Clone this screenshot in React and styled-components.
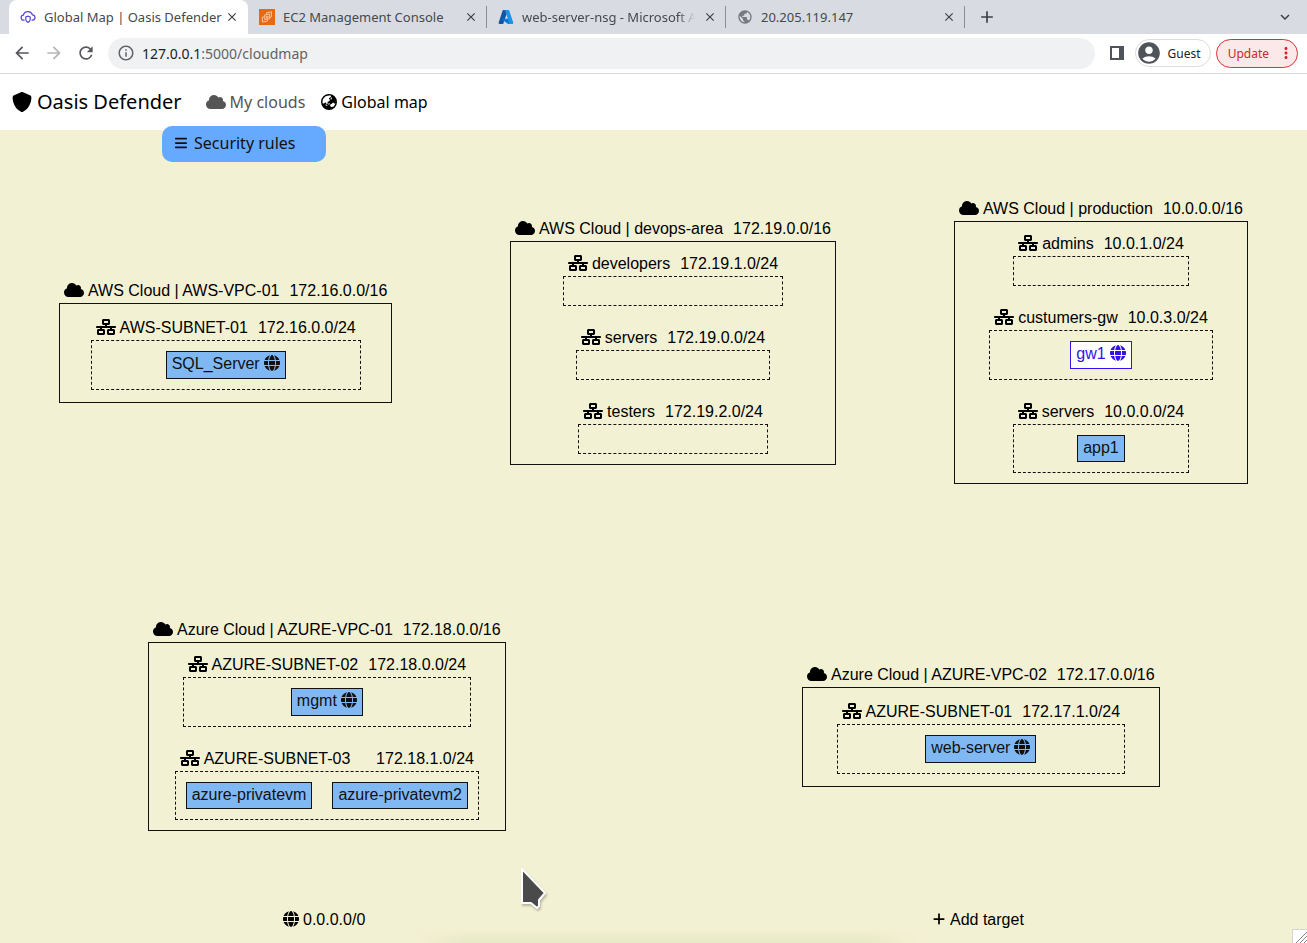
import React from "react";
import styled, { createGlobalStyle } from "styled-components";
import {
  FaBars,
  FaCloud,
  FaEarthAsia,
  FaGlobe,
  FaNetworkWired,
  FaPlus,
  FaShield,
} from "react-icons/fa6";
import {
  MdArrowBack,
  MdArrowForward,
  MdRefresh,
  MdInfoOutline,
  MdClose,
  MdAdd,
  MdPublic,
  MdMoreVert,
  MdAccountCircle,
  MdExpandMore,
} from "react-icons/md";

const Global = createGlobalStyle`
  * { box-sizing: border-box; }
  body { margin: 0; background: #ffffff; }
  button { font: inherit; color: inherit; background: none; border: 0; padding: 0; margin: 0; cursor: pointer; }
  a { color: inherit; text-decoration: none; }
  svg { display: block; flex: none; }
`;

const Page = styled.div`
  display: flex;
  flex-direction: column;
  min-height: 100vh;
  overflow: hidden;
  font-family: "Noto Sans", sans-serif;
  color: #000000;
`;

/* ---- browser tabs ---- */

const TabStrip = styled.div`
  display: flex;
  align-items: stretch;
  height: 34px;
  padding-left: 9px;
  background: #d8dce2;
`;

const Tab = styled.div`
  display: flex;
  align-items: center;
  flex: 0 1 239px;
  min-width: 0;
  gap: 8px;
  padding: 0 8px 0 11px;
  font-size: 13px;
  color: #45494d;
  border-right: 1px solid transparent;
  border-image: ${(p) =>
    p.$divider
      ? "linear-gradient(transparent 20%, #8a8e94 20%, #8a8e94 80%, transparent 80%) 1"
      : "none"};
  border-radius: ${(p) => (p.$active ? "8px 8px 0 0" : "0")};
  background: ${(p) => (p.$active ? "#ffffff" : "transparent")};
`;

const TabTitle = styled.span`
  flex: 1;
  min-width: 0;
  white-space: nowrap;
  mask-image: ${(p) =>
    p.$fade ? "linear-gradient(to right, #000 90%, transparent)" : "none"};
`;

const StripButton = styled.button`
  display: flex;
  align-items: center;
  justify-content: center;
  width: ${(p) => p.$size || 14}px;
  color: #3c4043;
  margin-left: ${(p) => (p.$end ? "auto" : "0")};
`;

/* ---- browser toolbar ---- */

const Toolbar = styled.div`
  display: flex;
  align-items: center;
  height: 40px;
  padding: 0 9px 1px 12px;
  border-bottom: 1px solid #d9dadc;
`;

const NavButtons = styled.div`
  display: flex;
  gap: 12px;
  margin-right: 12px;
`;

const ToolButton = styled.button`
  color: ${(p) => (p.disabled ? "#b4b6b9" : "#55595e")};
`;

const AddressBar = styled.div`
  display: flex;
  align-items: center;
  flex: 1;
  gap: 7px;
  height: 31px;
  padding: 0 9px;
  border-radius: 16px;
  background: #f0f1f3;
  color: #5f6368;
  font-size: 14px;
`;

const Address = styled.span`
  b {
    font-weight: 400;
    color: #202124;
  }
`;

const ToolbarEnd = styled.div`
  display: flex;
  align-items: center;
  margin-left: 15px;
`;

const Profile = styled.button`
  display: flex;
  align-items: center;
  gap: 6px;
  height: 28px;
  margin: 0 5px 0 11px;
  padding: 0 9px 0 0;
  border: 1px solid #dadce0;
  border-radius: 14px;
  font-size: 12px;
  color: #202124;
  svg {
    color: #4f545a;
  }
`;

const Update = styled.button`
  display: flex;
  align-items: center;
  gap: 8px;
  height: 29px;
  padding: 0 2px 0 11px;
  border: 1px solid #d93038;
  border-radius: 15px;
  background: #fbe9e9;
  color: #d3222c;
  font-size: 12px;
`;

/* ---- site header ---- */

const Header = styled.header`
  display: flex;
  align-items: center;
  height: 56px;
  padding: 0 12px 1px;
`;

const Brand = styled.a`
  display: flex;
  align-items: center;
  gap: 5px;
  margin-right: 24px;
  font-size: 20px;
`;

const Menu = styled.nav`
  display: flex;
  gap: 16px;
`;

const MenuLink = styled.a`
  display: flex;
  align-items: center;
  gap: 4px;
  font-size: 16px;
  color: ${(p) => (p.$active ? "#000000" : "#555555")};
`;

/* ---- map canvas ---- */

const Canvas = styled.main`
  position: relative;
  flex: 1;
  min-height: 813px;
  background: #f3f1d3;
  font-family: "Liberation Sans", Arial, sans-serif;
  font-size: 16px;
`;

const RulesButton = styled.button`
  position: absolute;
  top: -4px;
  left: 162px;
  display: flex;
  align-items: center;
  gap: 6px;
  width: 164px;
  height: 36px;
  padding: 0 12px 2px;
  border-radius: 10px;
  background: #66aaff;
  font-family: "Noto Sans", sans-serif;
  color: #111111;
`;

const Placed = styled.div`
  position: absolute;
  left: ${(p) => p.$x}px;
  top: ${(p) => p.$y}px;
  white-space: nowrap;
`;

const Label = styled.div`
  display: flex;
  align-items: center;
  gap: 4px;
  height: 24px;
  padding: 0 5px;
  svg {
    margin-bottom: 2px;
  }
`;

const Cidr = styled.span`
  margin-left: auto;
  padding-left: 6px;
`;

const CloudBox = styled.div`
  display: flex;
  flex-direction: column;
  align-items: center;
  justify-content: center;
  gap: 20px;
  min-height: 100px;
  padding: 10px;
  border: 1px solid #111111;
`;

const Subnet = styled.section`
  display: flex;
  flex-direction: column;
`;

const SubnetBox = styled.div`
  display: flex;
  justify-content: center;
  gap: 20px;
  min-height: 30px;
  padding: ${(p) => (p.$empty ? 0 : 10)}px;
  border: 1px dashed #111111;
`;

const Host = styled.button`
  display: flex;
  align-items: center;
  gap: 4px;
  padding: 0 5px ${(p) => (p.$open ? 2 : 1)}px;
  line-height: 24px;
  border: 1px solid ${(p) => (p.$selected ? "#3311ee" : "#111111")};
  background: ${(p) => (p.$selected ? "#ffffff" : "#80b8f4")};
  color: ${(p) => (p.$selected ? "#3311ee" : "#111111")};
  svg {
    margin-bottom: 2px;
  }
`;

const Target = styled.button`
  display: flex;
  align-items: center;
  gap: 4px;
  height: 24px;
  svg {
    margin-bottom: 2px;
  }
`;

const DockShadow = styled.div`
  position: absolute;
  right: 30%;
  bottom: 0;
  left: 32%;
  height: 14px;
  background: linear-gradient(transparent, #e6e8c6);
  mask-image: linear-gradient(to right, transparent, #000 10%, #000 90%, transparent);
`;

const ResizeCorner = styled.div`
  position: absolute;
  right: 0;
  bottom: 0;
  border: 1px solid #d5d5d5;
  border-width: 1px 0 0 1px;
  background: #ffffff;
`;

const Pointer = styled(Placed)`
  pointer-events: none;
  filter: drop-shadow(1px 2px 1px rgba(0, 0, 0, 0.25));
`;

const CloudTabIcon = () => (
  <svg width="16" height="16" viewBox="0 0 16 16" fill="none" stroke="#5546d6" strokeWidth="1.2">
    <path d="M4.6 11.2H3.9A2.5 2.5 0 0 1 3.4 6.2 4.7 4.7 0 0 1 12.4 5.8 2.7 2.7 0 0 1 12.2 11.2H11.6" />
    <path d="M8 7.2 10.2 8V10.6C10.2 12 9.2 12.9 8 13.4 6.8 12.9 5.8 12 5.8 10.6V8Z" />
  </svg>
);

const Ec2Icon = () => (
  <svg width="16" height="16" viewBox="0 0 16 16" fill="none">
    <path d="M0 0H16V16H0Z" fill="#e66a14" />
    <g stroke="#ffd0a0" strokeWidth="0.9">
      <path d="M7.5 5V3.8L12.6 2.8 12.2 8 10.8 8.4" />
      <path d="M5.6 6 10.6 5 10.8 9.6 5.8 10.8Z" />
      <path d="M5.6 7.8 3.4 8.2V13L8.4 12.2V10.6M7.4 7.4 9 7.2V8.8L7.4 9.2Z" />
    </g>
  </svg>
);

const AzureIcon = () => (
  <svg width="16" height="16" viewBox="0 0 16 16">
    <path d="M5.4 1H10L5.2 15H1.6C.8 15 .4 14.4.7 13.6L4.6 1.6C4.7 1.2 5 1 5.4 1Z" fill="#1257a6" />
    <path d="M4.8 9.8H11.6L13 15H10L4.4 10.7C4 10.4 4.2 9.8 4.8 9.8Z" fill="#0b79d0" />
    <path d="M6.3 1H10.4C10.8 1 11.2 1.3 11.3 1.7L15.3 13.8C15.5 14.4 15.1 15 14.5 15H10.3C10.9 14.9 11.3 14.3 11.1 13.7L7.1 1.6C7 1.3 6.7 1 6.3 1Z" fill="#1c93ea" />
  </svg>
);

const SidePanelIcon = () => (
  <svg width="14" height="14" viewBox="0 0 14 14" fill="#4f545a">
    <path fillRule="evenodd" d="M0 0H14V14H0ZM2 2V12H9V2Z" />
  </svg>
);

const tabs = [
  { title: "Global Map | Oasis Defender", icon: <CloudTabIcon />, active: true },
  { title: "EC2 Management Console", icon: <Ec2Icon />, divider: true },
  { title: "web-server-nsg - Microsoft Az", icon: <AzureIcon />, fade: true, divider: true },
  { title: "20.205.119.147", icon: <MdPublic size={16} color="#77797c" />, divider: true },
];

const clouds = [
  {
    x: 59, y: 149, name: "AWS Cloud | AWS-VPC-01", cidr: "172.16.0.0/16",
    subnets: [
      { name: "AWS-SUBNET-01", cidr: "172.16.0.0/24", hosts: [{ name: "SQL_Server", open: true }] },
    ],
  },
  {
    x: 510, y: 87, name: "AWS Cloud | devops-area", cidr: "172.19.0.0/16",
    subnets: [
      { name: "developers", cidr: "172.19.1.0/24", hosts: [] },
      { name: "servers", cidr: "172.19.0.0/24", hosts: [] },
      { name: "testers", cidr: "172.19.2.0/24", hosts: [] },
    ],
  },
  {
    x: 954, y: 67, name: "AWS Cloud | production", cidr: "10.0.0.0/16",
    subnets: [
      { name: "admins", cidr: "10.0.1.0/24", hosts: [] },
      { name: "custumers-gw", cidr: "10.0.3.0/24", hosts: [{ name: "gw1", open: true, selected: true }] },
      { name: "servers", cidr: "10.0.0.0/24", hosts: [{ name: "app1" }] },
    ],
  },
  {
    x: 148, y: 488, name: "Azure Cloud | AZURE-VPC-01", cidr: "172.18.0.0/16",
    subnets: [
      { name: "AZURE-SUBNET-02", cidr: "172.18.0.0/24", hosts: [{ name: "mgmt", open: true }] },
      {
        name: "AZURE-SUBNET-03", cidr: "172.18.1.0/24",
        hosts: [{ name: "azure-privatevm" }, { name: "azure-privatevm2" }],
      },
    ],
  },
  {
    x: 802, y: 533, name: "Azure Cloud | AZURE-VPC-02", cidr: "172.17.0.0/16",
    subnets: [
      { name: "AZURE-SUBNET-01", cidr: "172.17.1.0/24", hosts: [{ name: "web-server", open: true }] },
    ],
  },
];

const Cloud = ({ cloud }) => (
  <Placed $x={cloud.x} $y={cloud.y}>
    <Label>
      <FaCloud size={20} />
      {cloud.name}
      <Cidr>{cloud.cidr}</Cidr>
    </Label>
    <CloudBox>
      {cloud.subnets.map((net) => (
        <Subnet key={net.name}>
          <Label>
            <FaNetworkWired size={20} />
            {net.name}
            <Cidr>{net.cidr}</Cidr>
          </Label>
          <SubnetBox $empty={net.hosts.length === 0}>
            {net.hosts.map((host) => (
              <Host key={host.name} type="button" $open={host.open} $selected={host.selected}>
                {host.name}
                {host.open && <FaGlobe size={16} />}
              </Host>
            ))}
          </SubnetBox>
        </Subnet>
      ))}
    </CloudBox>
  </Placed>
);

export default function App() {
  return (
    <Page>
      <Global />
      <TabStrip>
        {tabs.map((tab) => (
          <Tab key={tab.title} $active={tab.active} $divider={tab.divider}>
            {tab.icon}
            <TabTitle $fade={tab.fade}>{tab.title}</TabTitle>
            <StripButton type="button" aria-label={`Close ${tab.title}`}>
              <MdClose size={14} />
            </StripButton>
          </Tab>
        ))}
        <StripButton type="button" $size={44} aria-label="New tab">
          <MdAdd size={20} />
        </StripButton>
        <StripButton type="button" $size={44} $end aria-label="Search tabs">
          <MdExpandMore size={18} />
        </StripButton>
      </TabStrip>

      <Toolbar>
        <NavButtons>
          <ToolButton type="button" aria-label="Back"><MdArrowBack size={20} /></ToolButton>
          <ToolButton type="button" aria-label="Forward" disabled><MdArrowForward size={20} /></ToolButton>
          <ToolButton type="button" aria-label="Reload"><MdRefresh size={20} /></ToolButton>
        </NavButtons>
        <AddressBar>
          <MdInfoOutline size={18} />
          <Address><b>127.0.0.1</b>:5000/cloudmap</Address>
        </AddressBar>
        <ToolbarEnd>
          <ToolButton type="button" aria-label="Side panel"><SidePanelIcon /></ToolButton>
          <Profile type="button"><MdAccountCircle size={26} />Guest</Profile>
          <Update type="button">Update<MdMoreVert size={18} /></Update>
        </ToolbarEnd>
      </Toolbar>

      <Header>
        <Brand href="#"><FaShield size={20} />Oasis Defender</Brand>
        <Menu>
          <MenuLink href="#clouds"><FaCloud size={20} />My clouds</MenuLink>
          <MenuLink href="#map" $active><FaEarthAsia size={16} />Global map</MenuLink>
        </Menu>
      </Header>

      <Canvas>
        <DockShadow />
        <RulesButton type="button"><FaBars size={14} />Security rules</RulesButton>
        {clouds.map((cloud) => (
          <Cloud key={cloud.name} cloud={cloud} />
        ))}
        <Placed $x={283} $y={778}>
          <Target type="button"><FaGlobe size={16} />0.0.0.0/0</Target>
        </Placed>
        <Placed $x={932} $y={778}>
          <Target type="button"><FaPlus size={14} />Add target</Target>
        </Placed>
        <Pointer $x={520} $y={737}>
          <svg width="28" height="44" viewBox="0 0 28 44">
            <path d="M2 2V36H11L17 41L19 39V33L25 26Z" fill="#4a4a4a" stroke="#ffffff" strokeWidth="2" strokeLinejoin="round" />
          </svg>
        </Pointer>
        <ResizeCorner>
          <svg width="14" height="13" viewBox="0 0 14 13" stroke="#8a8a8a">
            <path d="M3 13 14 2M7 13 14 6M11 13 14 10" />
          </svg>
        </ResizeCorner>
      </Canvas>
    </Page>
  );
}
